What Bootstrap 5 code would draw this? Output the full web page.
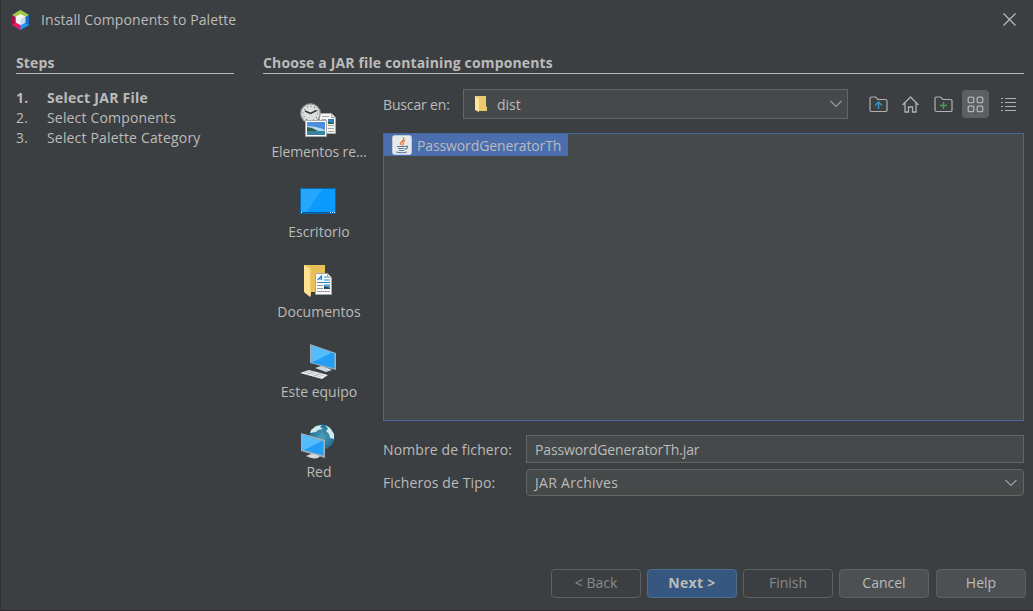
<!DOCTYPE html>
<html lang="es" data-bs-theme="dark">
<head>
<meta charset="utf-8">
<meta name="viewport" content="width=device-width, initial-scale=1">
<title>Install Components to Palette</title>
<link href="https://cdn.jsdelivr.net/npm/bootstrap@5.3.0/dist/css/bootstrap.min.css" rel="stylesheet">
<style>
:root{--tx:#bbb;--bg:#3c3f41;--field:#45494a;--edge:#646464}
body{background:var(--bg);color:var(--tx);font:14px/20px "Open Sans","Noto Sans",sans-serif;height:611px;overflow:hidden}
.dialog{height:611px;border-left:1px solid #303234;border-bottom:1px solid #2b292d}
.titlebar{height:40px;padding:0 17px 1px 10px}
.title-text{margin-left:11px;letter-spacing:.09px}
.content{height:507px;padding:12px 9px 0 15px}
.steps{width:218px;margin-right:29px}
.section-title{height:22px;line-height:22px;font-size:14px;font-weight:700;color:var(--tx);letter-spacing:.14px;border-bottom:1px solid #b9bbbc;margin:0}
.steps ol{margin:14px 0 0;padding:0;list-style:none}
.steps li{letter-spacing:.17px}
.steps li.fw-bold{letter-spacing:.27px}
.steps .num{width:31px}
.places{width:111px;margin-right:9px;padding-top:18px}
.place{height:80px;background:none;border:0;color:var(--tx);padding:0 0 0 1px;line-height:20px}
.place svg{display:block;width:36px;height:36px;margin:0 0 3px 36px}
.tight{letter-spacing:-.12px}
.field{background:var(--field);border:1px solid var(--edge);color:var(--tx);padding:0 7px 0 8px}
.lookin{width:385px;height:30px;padding-left:8px;padding-right:4px}
.label-look{width:80px;letter-spacing:-.15px;padding-top:1px}
.dir-name{margin-left:5px;padding-top:1px}
.label-file{width:143px;letter-spacing:.11px}
.tools{margin-left:16.5px;gap:5.5px}
.tool{width:27px;height:28px;background:none;border:0;border-radius:4px;padding:0}
.tool.active{background:#5c6063}
.files{height:288px;background:var(--field);border:1px solid #466aa0;margin-top:14px}
.file{background:#4b6eaf;width:184px;height:22px;padding-left:8px;gap:5px;letter-spacing:-.12px}
.file .fit{padding-top:1px}
.file-row{margin-top:14px}
.name-field{height:28px;letter-spacing:-.12px}
.file-row .fit{position:relative;top:.5px}
.type-row{margin-top:6px}
.type-field{height:27px;padding-right:5px;letter-spacing:.28px}
.chooser{padding-top:15px}
.btn-dlg{--bs-btn-font-size:14px;--bs-btn-line-height:20px;--bs-btn-padding-y:0;--bs-btn-border-radius:4px;--bs-btn-color:#bbb;--bs-btn-bg:#4c5052;--bs-btn-border-color:#5e6060;--bs-btn-disabled-color:#888;--bs-btn-disabled-bg:#3c3f41;--bs-btn-disabled-border-color:#5e6060;--bs-btn-disabled-opacity:1;width:90px;height:29px;padding-bottom:2px}
.btn-next{--bs-btn-bg:#365880;--bs-btn-border-color:#4c708c;font-weight:700;letter-spacing:.3px}
.footer-bar{height:63px;border-top:1px solid #434041;padding:21px 7px 0 0;gap:6px}
.btn-help{margin-left:1px}
.fit{white-space:nowrap}
</style>
</head>
<body>
<div class="dialog d-flex flex-column">
  <header class="titlebar d-flex align-items-center justify-content-between">
    <div class="d-flex align-items-center">
      <svg width="19" height="20" viewBox="0 0 19 20"><path d="M9.500 0L18 5v10l-8.500 5L1 15V5z" fill="#2196f3"/><path d="M9.500 0L18 5l-4.500 2.500-4-2-4 2L1 5z" fill="#a4c73c"/><path d="M1 5l4 2.500v6L1 15z" fill="#ad0e4c"/><path d="M1 15l4.500-2.500 4 2.500v5z" fill="#ec1763"/><path d="M18 5v10l-4-2V7.500z" fill="#1b6ac6"/><path d="M9.500 4l4.800 2.500v6L9.500 15l-4.800-2.500v-6z" fill="#f5f5f1"/><path d="M9.500 9l4.800-2.500v6L9.500 15z" fill="#c5dbe8"/></svg>
      <span class="title-text fit">Install Components to Palette</span>
    </div>
    <svg width="13" height="13" viewBox="0 0 13 13"><path d="M.5.5l12 12M12.500.5l-12 12" stroke="#bbb" stroke-width="1.200"/></svg>
  </header>
  <main class="content d-flex">
    <aside class="steps flex-shrink-0">
      <h1 class="section-title"><span class="fit">Steps</span></h1>
      <ol>
        <li class="d-flex fw-bold"><span class="num">1.</span><span class="fit">Select JAR File</span></li>
        <li class="d-flex"><span class="num">2.</span><span class="fit">Select Components</span></li>
        <li class="d-flex"><span class="num">3.</span><span class="fit">Select Palette Category</span></li>
      </ol>
    </aside>
    <section class="flex-grow-1">
      <h2 class="section-title"><span class="fit">Choose a JAR file containing components</span></h2>
      <div class="d-flex">
        <nav class="places d-flex flex-column flex-shrink-0">
          <button class="place"><svg viewBox="0 0 36 36"><path d="M19.500 10.500h12l4 4v16h-16z" fill="#f5f5f3" stroke="#a9aaa9"/><path d="M31.500 10.500v4h4" fill="#ddd" stroke="#aaa"/><path d="M22 13.500h7M22 16.500h4M22 19.500h4M28 22.500h6M28 25.500h6M28 28.500h6" stroke="#a6a6a6"/><path d="M28 16h6v5h-6z" fill="#337dc1"/><path d="M28 19l6 1v1h-6z" fill="#286b38"/><circle cx="10.500" cy="10.500" r="9.700" fill="#dde0e0" stroke="#959999" stroke-width="1.300"/><circle cx="10.500" cy="10.500" r="7.200" fill="none" stroke="#555" stroke-width="1.200" stroke-dasharray=".8 2.970"/><path d="M5 8l5.500 2.500 6-3" fill="none" stroke="#333" stroke-width="1.400"/><path d="M5.500 17.500h21v16h-21z" fill="#fff" stroke="#aaa"/><path d="M7 19h18v13H7z" fill="#4b8edb"/><path d="M7 23q9 0 18 4v5H7z" fill="#b2d9ed"/><path d="M7 24l5 1 6 3H7z" fill="#315c45"/><path d="M7 28h18v4H7z" fill="#3983a1"/></svg><span class="fit tight">Elementos re...</span></button>
          <button class="place"><svg viewBox="0 0 36 36"><path d="M0 5h36v26H0z" fill="#0869ad"/><path d="M1 6h34v23H1z" fill="#0d9afd"/><path d="M1 6h21L7 29H1z" fill="#25a7fd"/><path d="M1 29.500h34" stroke="#075d9c"/><path d="M1 29.500h1M30 29.500h1M32 29.500h1M34 29.500h1" stroke="#e7f7ff"/></svg><span class="fit">Escritorio</span></button>
          <button class="place"><svg viewBox="0 0 36 36"><path d="M4 2h21v27H10z" fill="#e9bf58"/><path d="M4 2l7 4v25l-1 3-6-5z" fill="#ffe292"/><path d="M9.500 5.500l1.500.5v25l-1 3z" fill="#f3cf74"/><path d="M15.500 10.500h12l4 4v17h-16z" fill="#fafafa" stroke="#a1a6a8"/><path d="M27.500 10.500v4h4" fill="#ddd" stroke="#aaa"/><path d="M17.500 17l4-4v4M19 16h2.500M24 14h3M24 17h6M17 19.500h13" fill="none" stroke="#208cd1" stroke-width="1.200"/><path d="M17 22.500h6M17 25.500h6M17 28.500h13" stroke="#999"/><path d="M24 21.500h6V26h-6z" fill="#559ed5"/><path d="M24 23l6 2v1h-6z" fill="#244d55"/></svg><span class="fit">Documentos</span></button>
          <button class="place"><svg viewBox="0 0 36 36"><path d="M10 1l26 9v17l-26-7z" fill="#a4b0b7"/><path d="M11 2.500l23.500 8v15L11 19.500z" fill="#229ff5"/><path d="M11 2.500l21 7-20 10-1-.3z" fill="#54bbfc"/><path d="M21 23l-6 2 11 4 6-2-4-2z" fill="#ccd6dc"/><path d="M0 30l9-3 19 5-6 4z" fill="#edf0f2"/><path d="M4 29l17 5M7 28l17 5M7 31.500l7-3.500M14 33.500l7-3.500" stroke="#9da8ae" stroke-width=".6"/></svg><span class="fit">Este equipo</span></button>
          <button class="place"><svg viewBox="0 0 36 36"><defs><radialGradient id="globe"><stop stop-color="#4c9fbc"/><stop offset="1" stop-color="#216f96"/></radialGradient></defs><circle cx="22" cy="14" r="12.500" fill="url(#globe)"/><path d="M11 7l5-4 6-1-2 2 3 2-5 1-2 2-6 1zM25 2l5 3 4 6v5l-4-1-1-4-3-3 2-2z" fill="#d4e9ec"/><path d="M1 10l24 7v18L1 28z" fill="#a4b0b7"/><path d="M2 11.500l21.500 7v14L2 26.800z" fill="#229ff5"/><path d="M2 11.500l20 6.500L4 27l-2-.3z" fill="#54bbfc"/><path d="M11 31l-5 2q6 3.500 12 2l2-2-6-2z" fill="#d3dadd"/></svg><span class="fit">Red</span></button>
        </nav>
        <div class="flex-grow-1 chooser">
          <div class="d-flex align-items-center">
            <label class="label-look fit">Buscar en:</label>
            <div class="field lookin d-flex align-items-center">
              <svg width="20" height="20" viewBox="0 0 20 20"><path d="M3 2h11v10l1 1v4H5z" fill="#edc96d"/><path d="M3 2l4 3v13l-4-2z" fill="#ffe59c"/></svg>
              <span class="fit flex-grow-1 dir-name">dist</span>
              <svg width="14" height="8" viewBox="0 0 14 8"><path d="M1.500 1l5.500 5.500L12.500 1" fill="none" stroke="#9a9da0" stroke-width="1.200"/></svg>
            </div>
            <div class="tools d-flex">
              <button class="tool d-flex align-items-center justify-content-center"><svg width="19" height="17" viewBox="0 0 19 17"><path d="M1 2.500Q1 1 2.500 1h4l2.500 2.500h7.500Q18 3.500 18 5v9.500q0 1-1.500 1h-14Q1 15.500 1 14z" fill="none" stroke="#afb1b3" stroke-width="1.200"/><path d="M9.500 13V6.500M6 9.500L9.500 6 13 9.500" fill="none" stroke="#3592c4" stroke-width="1.500"/></svg></button>
              <button class="tool d-flex align-items-center justify-content-center"><svg width="19" height="17" viewBox="0 0 19 17"><path d="M1.500 9L9.500 1l8 8M4 7v9h3.500v-5h4v5H15V7" fill="none" stroke="#afb1b3" stroke-width="1.300"/></svg></button>
              <button class="tool d-flex align-items-center justify-content-center"><svg width="19" height="17" viewBox="0 0 19 17"><path d="M1 2.500Q1 1 2.500 1h4l2.500 2.500h7.500Q18 3.500 18 5v9.500q0 1-1.500 1h-14Q1 15.500 1 14z" fill="none" stroke="#afb1b3" stroke-width="1.200"/><path d="M9.500 6v7M6 9.500h7" stroke="#499c54" stroke-width="1.400"/></svg></button>
              <button class="tool active d-flex align-items-center justify-content-center"><svg width="17" height="17" viewBox="0 0 17 17"><g fill="none" stroke="#afb1b3" stroke-width="1.300"><rect x="1.200" y="1.200" width="5.500" height="5.500" rx="1"/><rect x="10.200" y="1.200" width="5.500" height="5.500" rx="1"/><rect x="1.200" y="10.200" width="5.500" height="5.500" rx="1"/><rect x="10.200" y="10.200" width="5.500" height="5.500" rx="1"/></g></svg></button>
              <button class="tool d-flex align-items-center justify-content-center"><svg width="17" height="15" viewBox="0 0 17 15"><path d="M1 1.500h2M5 1.500h11M1 5.500h2M5 5.500h11M1 9.500h2M5 9.500h11M1 13.500h2M5 13.500h11" stroke="#afb1b3" stroke-width="1.200"/></svg></button>
            </div>
          </div>
          <div class="files">
            <div class="file d-flex align-items-center">
              <svg width="20" height="20" viewBox="0 0 20 20"><rect x=".5" y=".5" width="19" height="19" rx="2" fill="#e7eaed" stroke="#c0c8d1"/><path d="M11 2.500q2 2-1 4t-.5 3.500M13 5.500q-3 1.500-2 2.500t-.5 2.500" fill="none" stroke="#ec7835" stroke-width="1.300"/><path d="M5 11.500h8.500q3-1 2 1t-3 1.500M6 13.500h6M7 15.500h5M4 17q6 1.500 11 0" fill="none" stroke="#557b9c" stroke-width="1.100"/></svg>
              <span class="fit">PasswordGeneratorTh</span>
            </div>
          </div>
          <div class="d-flex align-items-center file-row">
            <label class="label-file"><span class="fit">Nombre de fichero:</span></label>
            <div class="field flex-grow-1 d-flex align-items-center name-field"><span class="fit">PasswordGeneratorTh.jar</span></div>
          </div>
          <div class="d-flex align-items-center type-row">
            <label class="label-file"><span class="fit">Ficheros de Tipo:</span></label>
            <div class="field rounded-1 flex-grow-1 d-flex align-items-center justify-content-between type-field"><span class="fit">JAR Archives</span><svg width="14" height="8" viewBox="0 0 14 8"><path d="M1.500 1l5.500 5.500L12.500 1" fill="none" stroke="#9a9da0" stroke-width="1.200"/></svg></div>
          </div>
        </div>
      </div>
    </section>
  </main>
  <footer class="footer-bar d-flex justify-content-end">
    <button class="btn btn-dlg" disabled>&lt; Back</button>
    <button class="btn btn-dlg btn-next">Next &gt;</button>
    <button class="btn btn-dlg" disabled>Finish</button>
    <button class="btn btn-dlg">Cancel</button>
    <button class="btn btn-dlg btn-help">Help</button>
  </footer>
</div>
<script src="https://cdn.jsdelivr.net/npm/bootstrap@5.3.0/dist/js/bootstrap.bundle.min.js"></script>
</body>
</html>
